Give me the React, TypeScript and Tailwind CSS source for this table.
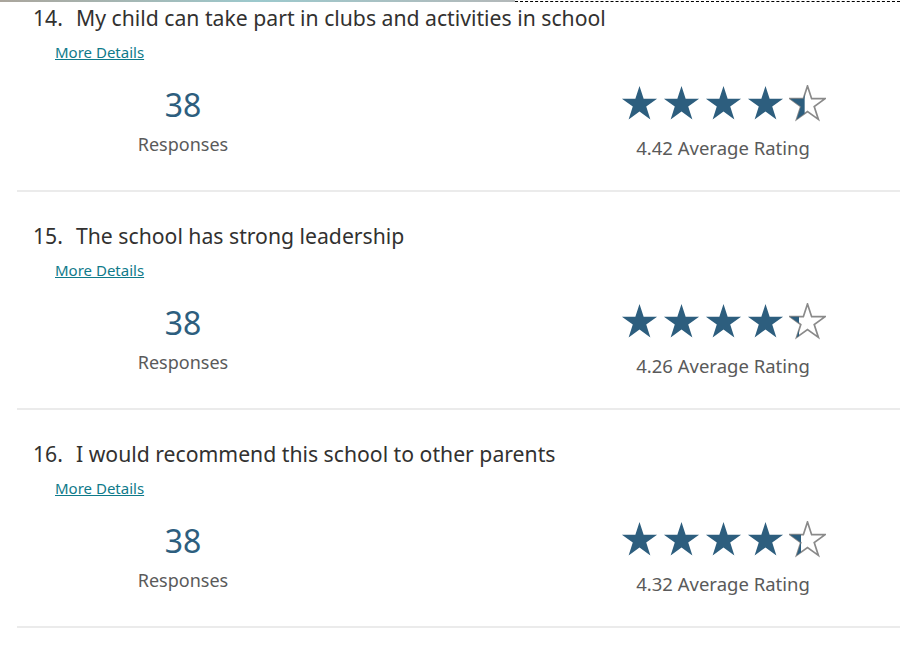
import React from "react";

const questions = [
  { num: "14.", text: "My child can take part in clubs and activities in school", responses: 38, rating: 4.42 },
  { num: "15.", text: "The school has strong leadership", responses: 38, rating: 4.26 },
  { num: "16.", text: "I would recommend this school to other parents", responses: 38, rating: 4.32 },
];

const STAR =
  "12,0.6 14.69,8.89 23.41,8.89 16.36,14.02 19.06,22.31 12,17.18 4.94,22.31 7.64,14.02 0.59,8.89 9.31,8.89";

const Star = ({ fill, id }: { fill: number; id: string }) => {
  return (
    <svg width="37" height="37" viewBox="0 0 24 24" className="shrink-0">
      {fill < 1 && (
        <polygon points={STAR} fill="none" stroke="#8a8a8a" strokeWidth="1.1" strokeLinejoin="miter" />
      )}
      {fill > 0 && (
        <>
          <defs>
            <clipPath id={id}>
              <rect x="0" y="0" width={24 * fill} height="24" />
            </clipPath>
          </defs>
          <polygon points={STAR} fill="#2d5e7e" clipPath={`url(#${id})`} />
        </>
      )}
    </svg>
  );
};

const Stars = ({ rating, qid }: { rating: number; qid: string }) => {
  return (
    <div className="flex gap-[5px]">
      {[0, 1, 2, 3, 4].map((i) => {
        const f = Math.max(0, Math.min(1, rating - i));
        // the partial star fills from the left edge of the glyph
        const adj = f > 0 && f < 1 ? 0.02 + f * 0.96 : f;
        return <Star key={i} fill={adj} id={`clip-${qid}-${i}`} />;
      })}
    </div>
  );
};

const App = () => {
  return (
    <div className="w-[900px] h-[651px] overflow-hidden bg-white font-['Noto_Sans',sans-serif]">
      <div className="flex h-[3px]">
        <div className="w-[515px] h-[2px] bg-linear-to-r from-[#aaa59c] via-[#9cc9cd] to-[#b3b8b9]" />
        <div className="flex-1 mt-[1px] border-t border-dashed border-black" />
      </div>
      <div className="ml-[17px]">
        {questions.map((q, idx) => (
          <section
            key={q.num}
            className={`border-b-2 border-[#ebebeb] pb-[30px] ${idx === 0 ? "pt-[1px]" : "pt-[30px]"}`}
          >
            <div className="flex pl-[16px] text-[21.2px] leading-[28px] text-[#323130]">
              <span className="w-[43px]">{q.num}</span>
              <span>{q.text}</span>
            </div>
            <div className="mt-[10px] pl-[38px] h-[20px] leading-[20px]">
              <a href="#" className="block w-fit text-[15px] leading-[20px] text-[#0f7a8a] underline">
                More Details
              </a>
            </div>
            <div className="mt-[23px] flex">
              <div className="ml-[38px] w-[256px] flex flex-col items-center">
                <div className="text-[32px] leading-[40px] text-[#2d5e7e]">{q.responses}</div>
                <div className="mt-[7px] text-[18px] leading-[24px] text-[#5a5a5a]">Responses</div>
              </div>
              <div className="ml-[302px] w-[220px] flex flex-col items-center">
                <Stars rating={q.rating} qid={q.num} />
                <div className="mt-[14px] text-[18.5px] leading-[24px] text-[#5a5a5a]">
                  {q.rating.toFixed(2)} Average Rating
                </div>
              </div>
            </div>
          </section>
        ))}
      </div>
    </div>
  );
};

export default App;
